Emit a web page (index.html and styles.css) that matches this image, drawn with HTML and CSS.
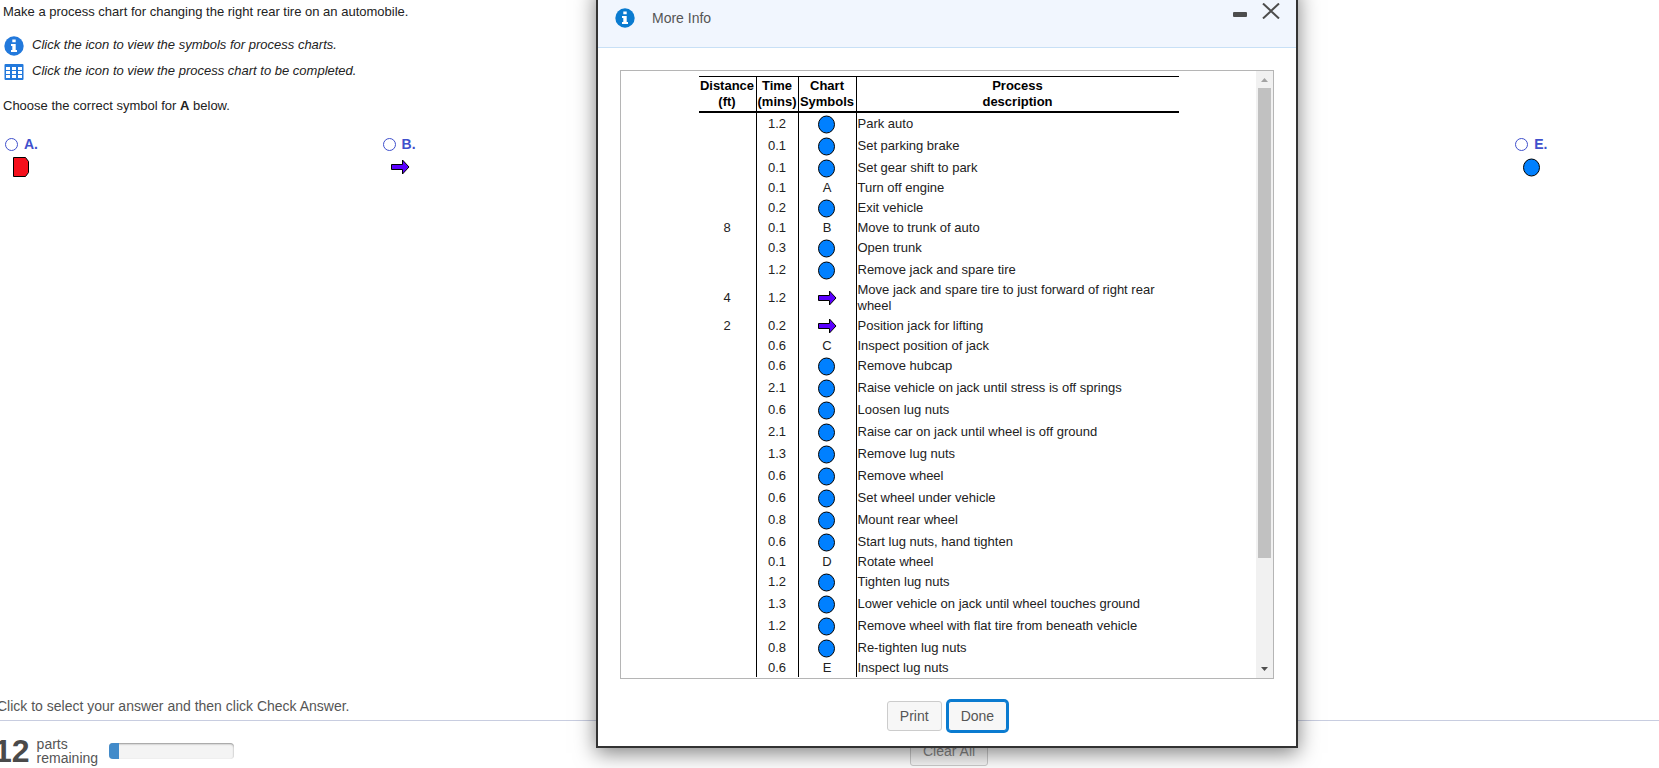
FILE: index.html
```html
<!DOCTYPE html>
<html lang="en">
<head>
  <meta charset="utf-8">
  <title>Process Chart</title>
  <link rel="stylesheet" href="styles.css">
</head>
<body>
  <!-- shared symbols -->
  <svg class="defs" aria-hidden="true">
    <symbol id="circle" viewBox="0 0 20 20">
      <ellipse cx="9.500" cy="10.500" rx="8" ry="8.500" fill="#0080ff" stroke="#000" stroke-width="1"/>
    </symbol>
    <symbol id="arrow" viewBox="0 0 20 20">
      <path d="M1.500 7.500h11v-4.500l6.500 7-6.500 7v-4.500h-11z" fill="#5a00ff" stroke="#000" stroke-width="1"/>
    </symbol>
    <symbol id="info" viewBox="0 0 20 20">
      <circle cx="10" cy="10" r="9.700" fill="currentColor"/>
      <path d="M8.300 3.500h3.400v2.700H8.300zM7 8h4.700v6H13v2H7v-2h1.300v-4H7z" fill="#fff"/>
    </symbol>
  </svg>

  <main class="page">
    <p>Make a process chart for changing the right rear tire on an automobile.</p>
    <a class="popup-link" href="#symbols">
      <svg width="20" height="20"><use href="#info"/></svg>
      <span>Click the icon to view the symbols for process charts.</span>
    </a>
    <a class="popup-link" href="#chart">
      <svg width="20" height="20" viewBox="0 0 20 20">
        <rect x="0.500" y="2" width="19" height="16" rx="1" fill="currentColor"/>
        <path d="M2 5h4v3H2zM8 5h4v3H8zM14 5h4v3h-4zM2 9h4v3H2zM8 9h4v3H8zM14 9h4v3h-4zM2 13h4v3H2zM8 13h4v3H8zM14 13h4v3h-4z" fill="#fff"/>
      </svg>
      <span>Click the icon to view the process chart to be completed.</span>
    </a>
    <p class="question">Choose the correct symbol for <b>A</b> below.</p>

    <form class="choices">
      <div class="choice">
        <label><input type="radio" name="symbol"> A.</label>
        <svg viewBox="0 0 20 20"><path d="M1.500 0.500h12l3 4v11l-3 4h-12z" fill="#f5101c" stroke="#000"/></svg>
      </div>
      <div class="choice">
        <label><input type="radio" name="symbol"> B.</label>
        <svg><use href="#arrow"/></svg>
      </div>
      <div class="choice">
        <label><input type="radio" name="symbol"> C.</label>
        <svg viewBox="0 0 20 20"><path d="M2 2h16l-8 16z" fill="#ffd800" stroke="#000"/></svg>
      </div>
      <div class="choice">
        <label><input type="radio" name="symbol"> D.</label>
        <svg viewBox="0 0 20 20"><path d="M1.500 2.500h15v15h-15z" fill="#00a030" stroke="#000"/></svg>
      </div>
      <div class="choice">
        <label><input type="radio" name="symbol"> E.</label>
        <svg><use href="#circle"/></svg>
      </div>
    </form>
  </main>

  <footer class="footer">
    <p class="hint">Click to select your answer and then click Check Answer.</p>
    <div class="toolbar">
      <div class="status">
        <span class="count">12</span>
        <span class="parts">parts<br>remaining</span>
        <div class="progress"><div class="bar" style="width: 8%"></div></div>
      </div>
      <button class="btn clear" type="button">Clear All</button>
    </div>
  </footer>

  <div class="dialog" role="dialog" aria-labelledby="dialog-title">
    <div class="dialog-header">
      <svg width="20" height="20"><use href="#info"/></svg>
      <span id="dialog-title">More Info</span>
      <button class="tool minimize" type="button" aria-label="Minimize">
        <svg width="14" height="6"><rect width="14" height="5" rx="1" fill="#4d4d4d"/></svg>
      </button>
      <button class="tool" type="button" aria-label="Close">
        <svg width="18" height="16" viewBox="0 0 18 16"><path d="M1 0.500l16 15M17 0.500l-16 15" stroke="#4d4d4d" stroke-width="2" fill="none"/></svg>
      </button>
    </div>
    <div class="dialog-body">
      <div class="scroller">
        <div class="content">
          <table class="chart">
            <thead>
              <tr>
                <th class="distance">Distance<br>(ft)</th>
                <th class="time">Time<br>(mins)</th>
                <th class="symbol">Chart<br>Symbols</th>
                <th>Process<br>description</th>
              </tr>
            </thead>
            <tbody>
              <tr><td></td><td>1.2</td><td><svg><use href="#circle"/></svg></td><td>Park auto</td></tr>
              <tr><td></td><td>0.1</td><td><svg><use href="#circle"/></svg></td><td>Set parking brake</td></tr>
              <tr><td></td><td>0.1</td><td><svg><use href="#circle"/></svg></td><td>Set gear shift to park</td></tr>
              <tr><td></td><td>0.1</td><td>A</td><td>Turn off engine</td></tr>
              <tr><td></td><td>0.2</td><td><svg><use href="#circle"/></svg></td><td>Exit vehicle</td></tr>
              <tr><td>8</td><td>0.1</td><td>B</td><td>Move to trunk of auto</td></tr>
              <tr><td></td><td>0.3</td><td><svg><use href="#circle"/></svg></td><td>Open trunk</td></tr>
              <tr><td></td><td>1.2</td><td><svg><use href="#circle"/></svg></td><td>Remove jack and spare tire</td></tr>
              <tr><td>4</td><td>1.2</td><td><svg><use href="#arrow"/></svg></td><td>Move jack and spare tire to just forward of right rear wheel</td></tr>
              <tr><td>2</td><td>0.2</td><td><svg><use href="#arrow"/></svg></td><td>Position jack for lifting</td></tr>
              <tr><td></td><td>0.6</td><td>C</td><td>Inspect position of jack</td></tr>
              <tr><td></td><td>0.6</td><td><svg><use href="#circle"/></svg></td><td>Remove hubcap</td></tr>
              <tr><td></td><td>2.1</td><td><svg><use href="#circle"/></svg></td><td>Raise vehicle on jack until stress is off springs</td></tr>
              <tr><td></td><td>0.6</td><td><svg><use href="#circle"/></svg></td><td>Loosen lug nuts</td></tr>
              <tr><td></td><td>2.1</td><td><svg><use href="#circle"/></svg></td><td>Raise car on jack until wheel is off ground</td></tr>
              <tr><td></td><td>1.3</td><td><svg><use href="#circle"/></svg></td><td>Remove lug nuts</td></tr>
              <tr><td></td><td>0.6</td><td><svg><use href="#circle"/></svg></td><td>Remove wheel</td></tr>
              <tr><td></td><td>0.6</td><td><svg><use href="#circle"/></svg></td><td>Set wheel under vehicle</td></tr>
              <tr><td></td><td>0.8</td><td><svg><use href="#circle"/></svg></td><td>Mount rear wheel</td></tr>
              <tr><td></td><td>0.6</td><td><svg><use href="#circle"/></svg></td><td>Start lug nuts, hand tighten</td></tr>
              <tr><td></td><td>0.1</td><td>D</td><td>Rotate wheel</td></tr>
              <tr><td></td><td>1.2</td><td><svg><use href="#circle"/></svg></td><td>Tighten lug nuts</td></tr>
              <tr><td></td><td>1.3</td><td><svg><use href="#circle"/></svg></td><td>Lower vehicle on jack until wheel touches ground</td></tr>
              <tr><td></td><td>1.2</td><td><svg><use href="#circle"/></svg></td><td>Remove wheel with flat tire from beneath vehicle</td></tr>
              <tr><td></td><td>0.8</td><td><svg><use href="#circle"/></svg></td><td>Re-tighten lug nuts</td></tr>
              <tr><td></td><td>0.6</td><td>E</td><td>Inspect lug nuts</td></tr>
            </tbody>
          </table>
        </div>
        <div class="scrollbar" aria-hidden="true">
          <svg width="17" height="17"><path d="M5 11l3.500-4 3.500 4z" fill="#a3a3a3"/></svg>
          <div class="track"><div class="thumb" style="height: 82%"></div></div>
          <svg width="17" height="17"><path d="M5 6l3.500 4 3.500-4z" fill="#505050"/></svg>
        </div>
      </div>
      <div class="actions">
        <button class="btn" type="button">Print</button>
        <button class="btn primary" type="button">Done</button>
      </div>
    </div>
  </div>
</body>
</html>
```
FILE: styles.css
```css
* {
  box-sizing: border-box;
}

body {
  margin: 0;
  height: 100vh;
  overflow: hidden;
  display: flex;
  flex-direction: column;
  position: relative;
  background: #fff;
  color: #222;
  font: 13px/16px "Liberation Sans", Arial, sans-serif;
}

p {
  margin: 0;
}

svg {
  display: block;
  flex: none;
}

.defs {
  position: absolute;
  width: 0;
  height: 0;
}

/* question */
.page {
  flex: 1;
  padding: 4px 3px;
}

.popup-link {
  display: flex;
  align-items: center;
  gap: 8px;
  width: max-content;
  margin-top: 6px;
  padding-left: 1px;
  color: #222;
  font-style: italic;
  text-decoration: none;
}
.popup-link svg {
  color: #2279dc;
}
.popup-link span {
  padding-bottom: 2px;
}
p + .popup-link {
  margin-top: 16px;
}

.question {
  margin-top: 16px;
}

.choices {
  display: grid;
  grid-template-columns: repeat(5, 22.84%);
  margin-top: 22px;
}

.choice label {
  display: flex;
  align-items: center;
  gap: 6px;
  color: #3f50cc;
  font-size: 14px;
  font-weight: bold;
}
.choice svg {
  width: 20px;
  height: 20px;
  margin: 5px 0 0 9px;
}

input[type="radio"] {
  appearance: none;
  width: 13px;
  height: 13px;
  margin: 0 0 0 2px;
  border: 1px solid #3f50cc;
  border-radius: 50%;
  background: #fff;
}

/* footer */
.footer {
  color: #555;
  font-size: 14px;
}

.hint {
  padding-bottom: 6px;
  margin-left: -3px;
  border-bottom: 1px solid #c8cde0;
}

.toolbar {
  display: grid;
  grid-template-columns: 910px auto;
  justify-content: start;
  height: 47px;
  padding-top: 15px;
}

.status {
  display: flex;
  align-items: center;
  height: 30px;
  margin-left: -6px;
}

.count {
  color: #4a4a4a;
  font-size: 32px;
  font-weight: bold;
}

.parts {
  margin-left: 7px;
  line-height: 14px;
}

.progress {
  width: 125px;
  height: 16px;
  margin-left: 11px;
  overflow: hidden;
  border-radius: 4px;
  background: #f4f4f4;
  box-shadow: inset 0 1px 2px rgba(0,0,0,0.4);
}

.bar {
  height: 100%;
  background: #428bca;
}

.btn {
  height: 30px;
  padding: 0 12px;
  border: 1px solid #ccc;
  border-radius: 3px;
  background: #f7f7f7;
  color: #555;
  font: 14px/16px "Liberation Sans", Arial, sans-serif;
}

.clear {
  color: #888;
}

/* dialog */
.dialog {
  position: absolute;
  top: -14px;
  left: 596px;
  width: 702px;
  border: 2px solid #333;
  background: #fff;
  box-shadow: 0 5px 20px rgba(0,0,0,0.5);
}

.dialog-header {
  display: flex;
  align-items: center;
  height: 60px;
  padding: 0 16px 0 17px;
  border-bottom: 1px solid #c8e0f6;
  background: #f1f6fe;
  color: #555;
  font-size: 14px;
}
.dialog-header > svg {
  margin-right: 17px;
  color: #0a7bd0;
}

.tool {
  padding: 0;
  margin-bottom: 14px;
  border: 0;
  background: none;
}

.minimize {
  margin-left: auto;
  margin-right: 15px;
  padding-top: 8px;
}

.dialog-body {
  padding: 22px 22px 15px;
}

.scroller {
  display: flex;
  height: 609px;
  border: 1px solid #b5b5b5;
}

.content {
  flex: 1;
  overflow: auto;
  padding: 5px 0 132px;
}

.scrollbar {
  display: flex;
  flex-direction: column;
  width: 17px;
  background: #f1f1f1;
}

.track {
  flex: 1;
  padding: 0 2px;
}

.thumb {
  background: #c1c1c1;
}

.chart {
  width: 480px;
  margin: 0 auto;
  table-layout: fixed;
  border-spacing: 0;
}
.chart th {
  padding: 1px 0;
  border-top: 1px solid #000;
  border-bottom: 2px solid #000;
  color: #000;
}
.chart td {
  padding: 1px;
  text-align: center;
}
.chart th:not(:last-child),
.chart td:not(:last-child) {
  border-right: 1px solid #000;
}
.chart td:last-child {
  text-align: left;
}
.chart svg {
  width: 20px;
  height: 20px;
  margin: 0 auto;
}

.distance,
.symbol {
  width: 58px;
}

.time {
  width: 42px;
}

.actions {
  display: flex;
  justify-content: center;
  gap: 6px;
  margin-top: 22px;
}

.primary {
  border-color: #0a7bd0;
  box-shadow: 0 0 0 2px #0a7bd0;
}
```
